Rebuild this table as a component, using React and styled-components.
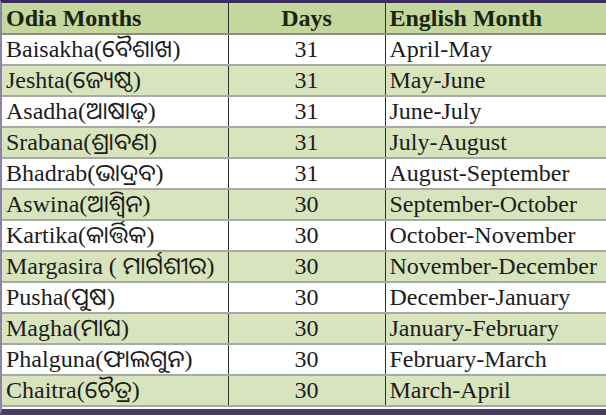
import React from "react";
import styled, { createGlobalStyle } from "styled-components";

const Global = createGlobalStyle`
  html, body { margin: 0; padding: 0; background: #ffffff; }
  body { width: 606px; height: 415px; overflow: hidden; }
`;

const Frame = styled.div`
  width: 606px;
  height: 415px;
  box-sizing: border-box;
  border-top: 3px solid #3a2b5e;
  border-bottom: 6px solid #4a3a66;
  border-left: 2px solid #8f84a6;
  background: #ffffff;
  overflow: hidden;
`;

const Table = styled.table`
  width: 100%;
  border-collapse: collapse;
  table-layout: fixed;
  font-family: "Liberation Serif", "Times New Roman", Tinos, "DejaVu Serif", "Noto Sans Oriya", "Noto Sans", serif;
  color: #1c1c1c;
`;

const Col = styled.col`
  width: ${(p) => p.$w}px;
`;

const HeadRow = styled.tr`
  background: #c4d79c;
  height: 31px;
  border-bottom: 2px solid #8c8c84;
`;

const Th = styled.th`
  padding: 0 4px;
  font-size: 24px;
  font-weight: bold;
  color: #1b2410;
  text-align: ${(p) => p.$align || "left"};
  border-left: ${(p) => (p.$first ? "none" : "1.5px solid #2e2e2e")};
  white-space: nowrap;
  line-height: 30px;
`;

const Row = styled.tr`
  background: ${(p) => (p.$alt ? "#d8e4be" : "#ffffff")};
  height: 29px;
  border-bottom: 2px solid #a9aaa4;
`;

const Td = styled.td`
  padding: 0 4px;
  font-size: 24px;
  text-align: ${(p) => p.$align || "left"};
  border-left: ${(p) => (p.$first ? "none" : "1.5px solid #2e2e2e")};
  white-space: nowrap;
  overflow: hidden;
  line-height: 29px;
`;

const data = [
  ["Baisakha(ବୈଶାଖ)", "31", "April-May"],
  ["Jeshta(ଜ୍ୟେଷ୍ଠ)", "31", "May-June"],
  ["Asadha(ଆଷାଢ଼)", "31", "June-July"],
  ["Srabana(ଶ୍ରାବଣ)", "31", "July-August"],
  ["Bhadrab(ଭାଦ୍ରବ)", "31", "August-September"],
  ["Aswina(ଆଶ୍ୱିନ)", "30", "September-October"],
  ["Kartika(କାର୍ତ୍ତିକ)", "30", "October-November"],
  ["Margasira ( ମାର୍ଗଶୀର)", "30", "November-December"],
  ["Pusha(ପୁଷ)", "30", "December-January"],
  ["Magha(ମାଘ)", "30", "January-February"],
  ["Phalguna(ଫାଲଗୁନ)", "30", "February-March"],
  ["Chaitra(ଚୈତ୍ର)", "30", "March-April"],
];

export default function App() {
  return (
    <>
      <Global />
      <Frame>
        <Table>
          <colgroup>
            <Col $w={226} />
            <Col $w={157} />
            <Col $w={221} />
          </colgroup>
          <thead>
            <HeadRow>
              <Th $first>Odia Months</Th>
              <Th $align="center">Days</Th>
              <Th>English Month</Th>
            </HeadRow>
          </thead>
          <tbody>
            {data.map(([o, d, e], i) => (
              <Row key={o} $alt={i % 2 === 1}>
                <Td $first>{o}</Td>
                <Td $align="center">{d}</Td>
                <Td>{e}</Td>
              </Row>
            ))}
          </tbody>
        </Table>
      </Frame>
    </>
  );
}
